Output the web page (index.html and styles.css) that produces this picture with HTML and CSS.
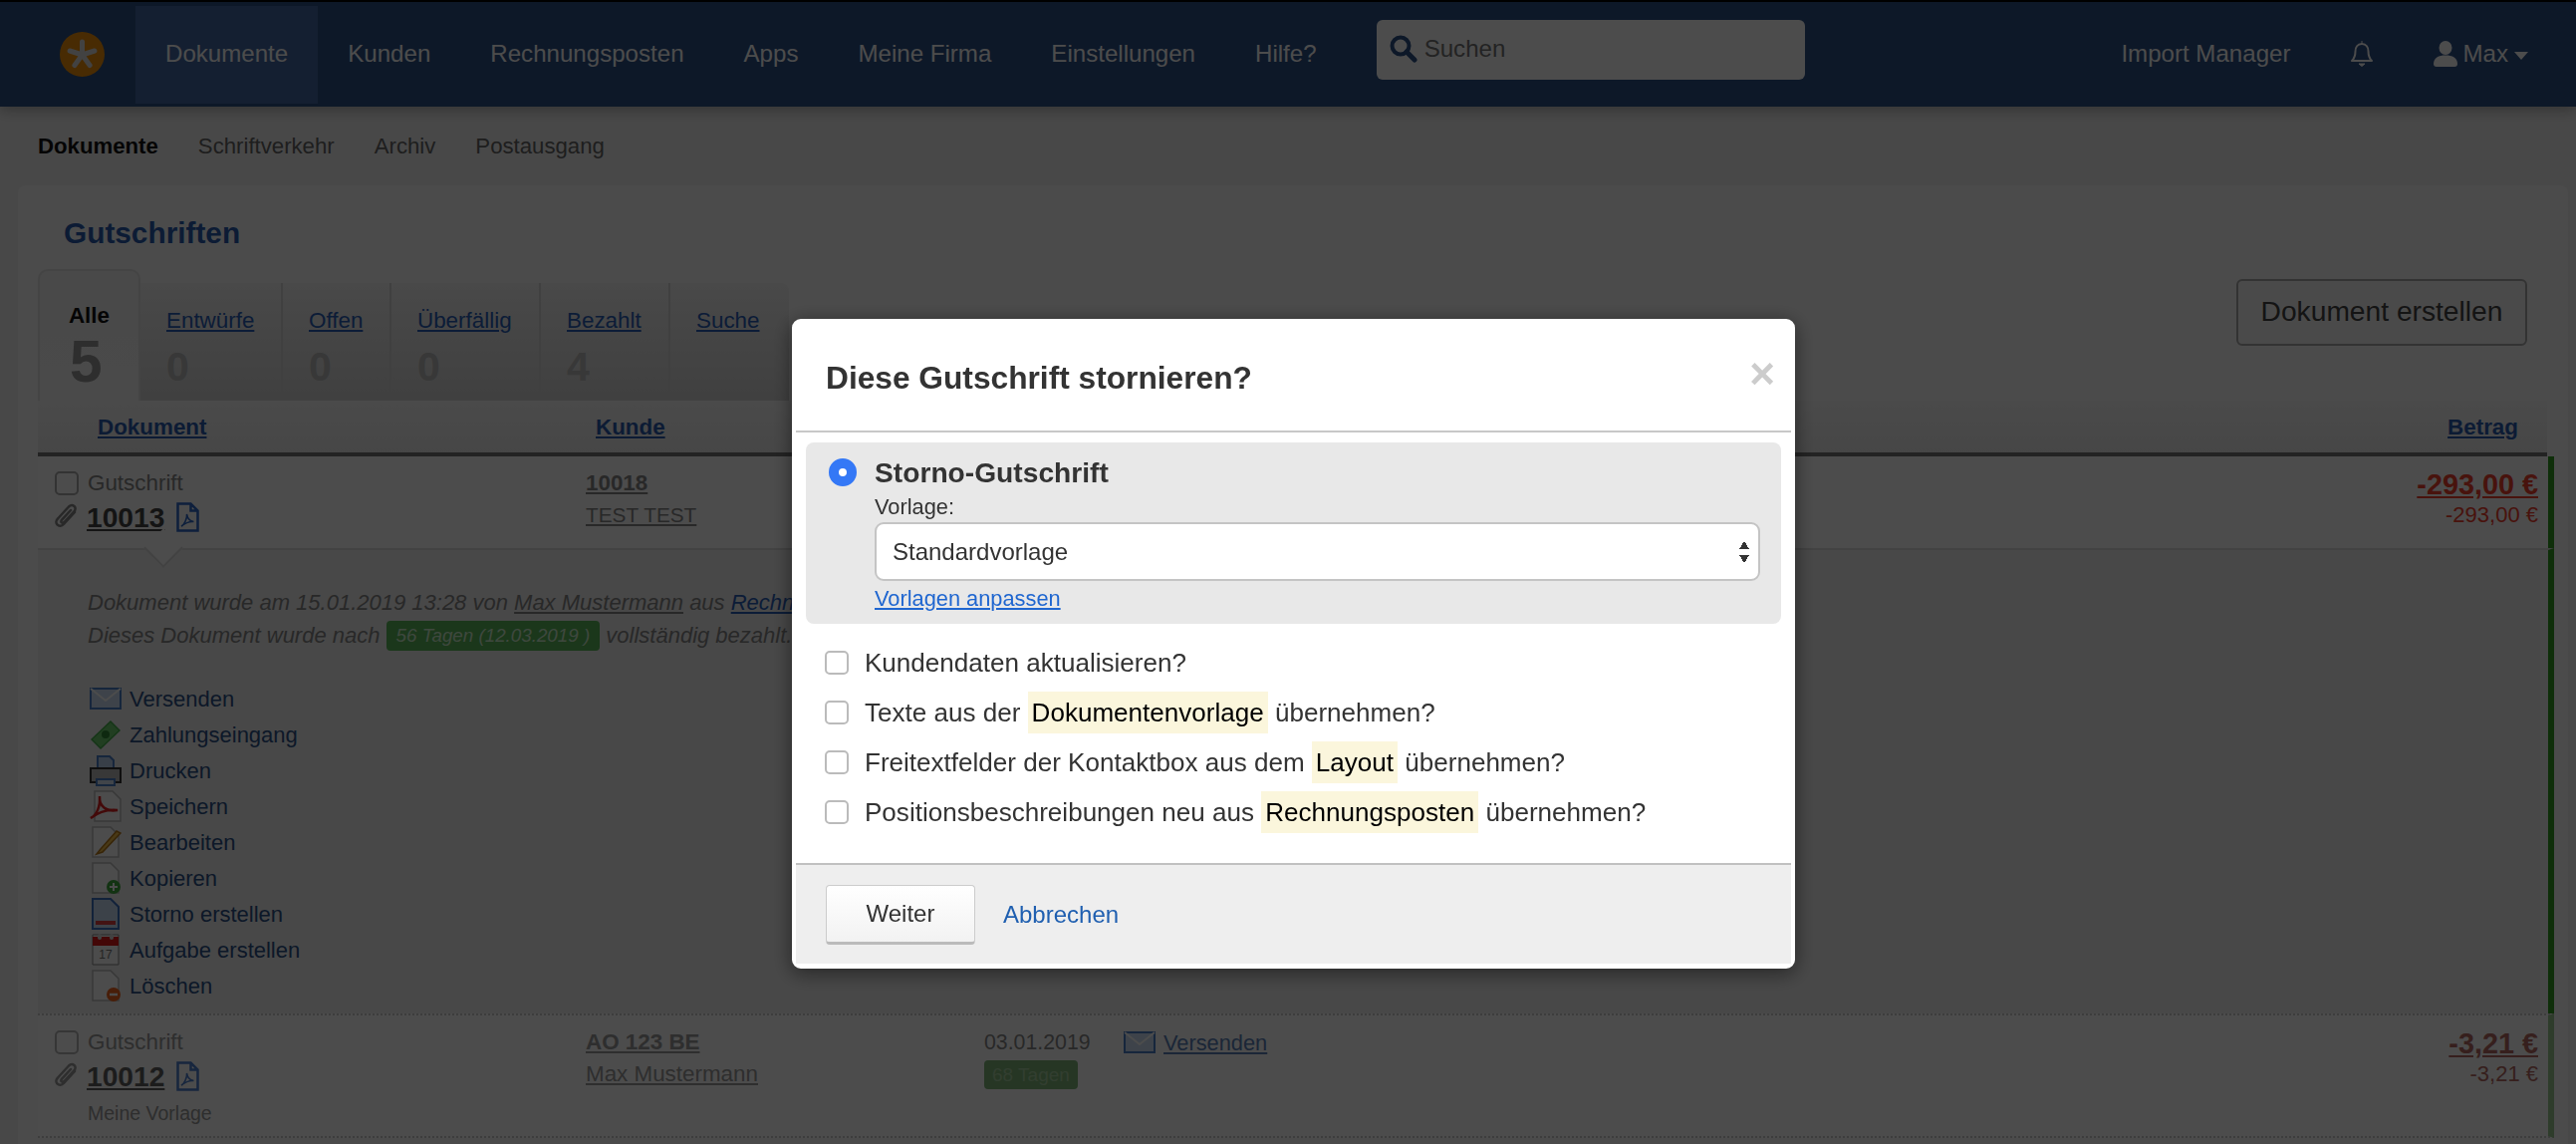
FILE: index.html
```html
<!DOCTYPE html>
<html lang="de">
<head>
  <meta charset="UTF-8">
  <title>Gutschriften</title>
  <link rel="stylesheet" href="styles.css">
</head>
<body>
  <div class="topnav">
    <a class="logo"><svg width="45" height="45" viewBox="0 0 45 45"><circle cx="22.5" cy="22.5" r="22.5" fill="#f0920a"/><path d="M22.5 23V10M22.500 23l12.400-4M22.500 23l7.600 10.500M22.500 23l-7.600 10.500M22.500 23l-12.400-4" stroke="#ddd" stroke-width="5" stroke-linecap="round"/></svg></a>
    <ul class="mainmenu">
      <li class="active">Dokumente</li>
      <li>Kunden</li>
      <li>Rechnungsposten</li>
      <li>Apps</li>
      <li>Meine Firma</li>
      <li>Einstellungen</li>
      <li>Hilfe?</li>
    </ul>
    <div class="search">
      <svg width="28" height="28" viewBox="0 0 28 28"><circle cx="11" cy="11" r="8.5" fill="none" stroke="#2c5088" stroke-width="4"/><path d="M17 17l8 8" stroke="#2c5088" stroke-width="5" stroke-linecap="round"/></svg>
      <span>Suchen</span>
    </div>
    <div class="usermenu">
      <span class="import">Import Manager</span>
      <svg class="bell" width="24" height="26" viewBox="0 0 24 26"><path d="M12 3c-4.500 0-6.500 3.500-6.500 7.500 0 4.500-1 7-3.500 9.500h20c-2.500-2.500-3.500-5-3.500-9.500C18.500 6.500 16.500 3 12 3z" fill="none" stroke="#fff" stroke-width="2" stroke-linejoin="round"/><path d="M12 0v3M9 23h6l-3 2.500z" stroke="#fff" fill="#fff"/></svg>
      <span class="user">
        <svg width="24" height="26" viewBox="0 0 24 26"><ellipse cx="12" cy="7" rx="6.500" ry="7" fill="#fff"/><path d="M0 23c0-6 5-8.500 12-8.500S24 17 24 23c0 2-1 3-3 3H3c-2 0-3-1-3-3z" fill="#fff"/></svg>
        Max<i class="caret"></i>
      </span>
    </div>
  </div>

  <ul class="subnav">
    <li class="current">Dokumente</li>
    <li>Schriftverkehr</li>
    <li>Archiv</li>
    <li>Postausgang</li>
  </ul>

  <div class="panel">
    <h1 class="title">Gutschriften</h1>

    <div class="toolbar">
      <div class="tabs">
        <div class="tab first"><b>Alle</b><strong>5</strong></div>
        <div class="tabstrip">
          <div class="tab w1"><a>Entwürfe</a><strong>0</strong></div>
          <div class="tab w2"><a>Offen</a><strong>0</strong></div>
          <div class="tab w3"><a>Überfällig</a><strong>0</strong></div>
          <div class="tab w4"><a>Bezahlt</a><strong>4</strong></div>
          <div class="tab"><a>Suche</a></div>
        </div>
      </div>
      <a class="create">Dokument erstellen</a>
    </div>

    <div class="thead">
      <a class="th-doc">Dokument</a>
      <a class="th-kunde">Kunde</a>
      <a class="th-betrag">Betrag</a>
    </div>

    <div class="row paid">
      <div class="cell-doc">
        <div class="doctype"><i class="check"></i>Gutschrift</div>
        <div class="docnum">
          <svg class="clip" width="24" height="28" viewBox="0 0 24 28"><path d="M20 9L9 21c-2 2.200-5 2.200-6.500.5C1 20 1 17.500 3 15.500L14 3.500c1.800-1.800 4-1.800 5.500-.5s1.500 3.500-.2 5.300L9.500 19c-1 1-2 1-2.700.4s-.6-1.700.3-2.700L16 7" fill="none" stroke="#888" stroke-width="2.500" stroke-linecap="round"/></svg>
          <a>10013</a>
          <svg class="pdf" width="23" height="30" viewBox="0 0 23 30"><path d="M1.500 1.500h13l7 7v20h-20zM14.500 1.500v7h7" fill="none" stroke="#2f6ac8" stroke-width="2.500"/><path d="M5 24c3-1 6-8 5.500-12 1 5 3 7 7 7.500-4-.5-8 1-12.500 4.500z" fill="none" stroke="#2f6ac8" stroke-width="1.500"/></svg>
        </div>
      </div>
      <div class="cell-kunde">
        <a class="knr">10018</a>
        <a class="kname tight">TEST TEST</a>
      </div>
      <div class="cell-betrag red">
        <a class="brutto">-293,00 €</a>
        <span class="netto">-293,00 €</span>
      </div>
    </div>

    <div class="details paid">
      <i class="notch"></i>
      <p>Dokument wurde am 15.01.2019 13:28 von <u>Max Mustermann</u> aus <a>Rechnung</a></p>
      <p>Dieses Dokument wurde nach <span class="badge">56 Tagen (12.03.2019 )</span> vollständig bezahlt.</p>
      <ul class="actions">
        <li>
          <svg width="32" height="26" viewBox="0 0 32 26"><rect x="1" y="3" width="30" height="20" fill="#cfe0f7" stroke="#4a7fc9" stroke-width="2"/><path d="M1 3l15 12L31 3" fill="none" stroke="#fff" stroke-width="2"/></svg>
          <a>Versenden</a>
        </li>
        <li>
          <svg width="32" height="30" viewBox="0 0 32 30"><path d="M1 20L21 1l10 10-20 19z" fill="#44b04a"/><path d="M3 20L21 3l8 8-18 17z" fill="#6fd06f"/><circle cx="16" cy="15" r="4" fill="#2f8a36"/></svg>
          <a>Zahlungseingang</a>
        </li>
        <li>
          <svg width="32" height="32" viewBox="0 0 32 32"><path d="M8 14V2h12l4 4v8z" fill="#bcd2f2" stroke="#4a7fc9" stroke-width="2"/><path d="M1 14h30v14H1z" fill="#bbb" stroke="#333" stroke-width="2"/><path d="M7 25h18v6H7z" fill="#dbe7f8" stroke="#4a7fc9" stroke-width="2"/></svg>
          <a>Drucken</a>
        </li>
        <li>
          <svg width="32" height="32" viewBox="0 0 32 32"><path d="M5 1h18l8 8v22H5z" fill="#fff" stroke="#bbb" stroke-width="1.500"/><path d="M1 28c6-3 10-12 9-22-1 10 7 16 18 14-9-1-18 1-27 8z" fill="none" stroke="#e02020" stroke-width="2.500"/></svg>
          <a>Speichern</a>
        </li>
        <li>
          <svg width="32" height="32" viewBox="0 0 32 32"><path d="M3 1h18l8 8v22H3z" fill="#fff" stroke="#bbb" stroke-width="1.500"/><path d="M27 5L11 23l-4 5 6-2 18-19z" fill="#f5c04a" stroke="#b97a1a" stroke-width="1.500"/></svg>
          <a>Bearbeiten</a>
        </li>
        <li>
          <svg width="32" height="32" viewBox="0 0 32 32"><path d="M3 1h18l8 8v22H3z" fill="#fff" stroke="#bbb" stroke-width="1.500"/><circle cx="24" cy="25" r="7" fill="#3faa3f"/><path d="M24 21v8M20 25h8" stroke="#fff" stroke-width="2"/></svg>
          <a>Kopieren</a>
        </li>
        <li>
          <svg width="32" height="32" viewBox="0 0 32 32"><path d="M3 1h18l8 8v22H3z" fill="#c9dcf6" stroke="#3d73c4" stroke-width="2"/><path d="M6 23h20v4H6z" fill="#e04040"/></svg>
          <a>Storno erstellen</a>
        </li>
        <li>
          <svg width="32" height="32" viewBox="0 0 32 32"><path d="M3 1h26v30H3z" fill="#fff" stroke="#888" stroke-width="1"/><path d="M3 3h26v9H3z" fill="#e01818"/><rect x="8" y="0" width="4" height="6" rx="2" fill="#ddd"/><rect x="20" y="0" width="4" height="6" rx="2" fill="#ddd"/><text class="calday" x="16" y="25">17</text></svg>
          <a>Aufgabe erstellen</a>
        </li>
        <li>
          <svg width="32" height="32" viewBox="0 0 32 32"><path d="M3 1h18l8 8v22H3z" fill="#fff" stroke="#bbb" stroke-width="1.500"/><circle cx="24" cy="25" r="7" fill="#f0641e"/><path d="M20 25h8" stroke="#fff" stroke-width="2.500"/></svg>
          <a>Löschen</a>
        </li>
      </ul>
    </div>

    <div class="row second paid-soft">
      <div class="cell-doc">
        <div class="doctype"><i class="check"></i>Gutschrift</div>
        <div class="docnum">
          <svg class="clip" width="24" height="28" viewBox="0 0 24 28"><path d="M20 9L9 21c-2 2.200-5 2.200-6.500.5C1 20 1 17.500 3 15.500L14 3.500c1.800-1.800 4-1.800 5.500-.5s1.500 3.500-.2 5.300L9.500 19c-1 1-2 1-2.700.4s-.6-1.700.3-2.700L16 7" fill="none" stroke="#888" stroke-width="2.500" stroke-linecap="round"/></svg>
          <a>10012</a>
          <svg class="pdf" width="23" height="30" viewBox="0 0 23 30"><path d="M1.500 1.500h13l7 7v20h-20zM14.500 1.500v7h7" fill="none" stroke="#2f6ac8" stroke-width="2.500"/><path d="M5 24c3-1 6-8 5.500-12 1 5 3 7 7 7.500-4-.5-8 1-12.500 4.500z" fill="none" stroke="#2f6ac8" stroke-width="1.500"/></svg>
        </div>
        <div class="tplname">Meine Vorlage</div>
      </div>
      <div class="cell-kunde">
        <a class="knr">AO 123 BE</a>
        <a class="kname">Max Mustermann</a>
      </div>
      <div class="cell-date">
        <span class="date">03.01.2019</span>
        <span class="badge soft">68 Tagen</span>
      </div>
      <div class="cell-send">
        <svg width="32" height="24" viewBox="0 0 32 24"><rect x="1" y="2" width="30" height="20" fill="#cfe0f7" stroke="#4a7fc9" stroke-width="2"/><path d="M1 2l15 12L31 2" fill="none" stroke="#fff" stroke-width="2"/></svg>
        <a>Versenden</a>
      </div>
      <div class="cell-betrag red soft">
        <a class="brutto">-3,21 €</a>
        <span class="netto">-3,21 €</span>
      </div>
    </div>
  </div>

  <div class="backdrop"></div>

  <div class="modal">
    <div class="modal-head">
      <h3>Diese Gutschrift stornieren?</h3>
      <span class="close">×</span>
    </div>
    <div class="modal-body">
      <div class="option">
        <i class="radio"></i>
        <div class="option-main">
          <b>Storno-Gutschrift</b>
          <label>Vorlage:</label>
          <div class="select">Standardvorlage<i class="updown"></i></div>
          <a>Vorlagen anpassen</a>
        </div>
      </div>
      <ul class="checks">
        <li><i class="check"></i>Kundendaten aktualisieren?</li>
        <li><i class="check"></i>Texte aus der <mark>Dokumentenvorlage</mark> übernehmen?</li>
        <li><i class="check"></i>Freitextfelder der Kontaktbox aus dem <mark>Layout</mark> übernehmen?</li>
        <li><i class="check"></i>Positionsbeschreibungen neu aus <mark>Rechnungsposten</mark> übernehmen?</li>
      </ul>
    </div>
    <div class="modal-foot">
      <a class="btn">Weiter</a>
      <a class="cancel">Abbrechen</a>
    </div>
  </div>
</body>
</html>
```

FILE: styles.css
```css
* {
  margin: 0;
  padding: 0;
  box-sizing: border-box;
}

html,
body {
  height: 100%;
  overflow: hidden;
}

body {
  font-family: "Liberation Sans", Arial, sans-serif;
  font-size: 21.8px;
  color: #888;
  background-color: #f2f2f2;
}

ul {
  list-style: none;
}

/* top navigation */
.topnav {
  display: flex;
  align-items: stretch;
  height: 107px;
  padding: 4px 0 3px;
  background-color: #2c5088;
  border-top: 2px solid #000;
  box-shadow: 0 2px 14px rgba(0, 0, 0, .35);
  color: #fff;
  font-size: 24.1px;
}

.logo {
  display: flex;
  align-items: center;
  width: 136px;
  padding: 0 0 2px 60px;
}

.mainmenu {
  display: flex;
}

.mainmenu>li {
  display: flex;
  align-items: center;
  padding: 0 30px 2px;
}

.mainmenu>.active {
  background-color: #456aa6;
}

.search {
  display: flex;
  align-items: center;
  gap: 7px;
  align-self: flex-start;
  width: 430px;
  height: 60px;
  margin: 14px 0 0 30px;
  padding: 0 0 2px 13px;
  background-color: #fff;
  border-radius: 6px;
  color: #777;
}

.usermenu {
  display: flex;
  align-items: center;
  margin-left: auto;
  padding: 0 48px 2px 0;
}

.bell {
  margin-left: 60px;
}

.user {
  display: flex;
  align-items: center;
  gap: 5px;
  margin-left: 60px;
}

.caret {
  width: 0;
  height: 0;
  margin-left: 1px;
  margin-top: 4px;
  border-style: solid;
  border-width: 8px 7px 0;
  border-color: #fff transparent transparent;
}

/* second level */
.subnav {
  display: flex;
  gap: 40px;
  height: 79px;
  padding: 27px 0 0 38px;
  font-size: 22.2px;
  color: #666;
}

.subnav>.current {
  color: #111;
  font-weight: 700;
}

.panel {
  height: 1000px;
  margin: 0 8px 0 18px;
  padding: 0 0 0 20px;
  background-color: #fcfcfc;
  border-radius: 8px 8px 0 0;
}

.title {
  padding: 31px 0 0 26px;
  height: 84px;
  font-size: 29.8px;
  color: #2a5cb0;
}

.toolbar {
  display: flex;
  justify-content: space-between;
  align-items: flex-start;
  height: 132px;
  padding-right: 41px;
}

.tabs {
  display: flex;
  align-items: flex-end;
  height: 132px;
}

.tab {
  display: flex;
  flex-direction: column;
  padding-left: 26px;
  height: 118px;
}

.tab a {
  margin-top: 26px;
  font-size: 22.4px;
  line-height: 24px;
  color: #2a60b8;
  text-decoration: underline;
}

.tab strong {
  margin-top: 11px;
  font-size: 41px;
  line-height: 46px;
  color: #bbb;
}

.tab.first {
  width: 103px;
  height: 132px;
  padding: 0;
  align-items: center;
  background-image: linear-gradient(#f4f4f4, #f8f8f8);
  border: 2px solid #e4e4e4;
  border-bottom: 0;
  border-radius: 10px 10px 0 0;
}

.tab.first b {
  margin-top: 32px;
  font-size: 22.4px;
  line-height: 26px;
  color: #111;
}

.tab.first strong {
  margin-top: 2px;
  font-size: 58.5px;
  line-height: 62px;
  color: #999;
  align-self: flex-start;
  padding-left: 30px;
}

.tabstrip {
  display: flex;
  width: 651px;
  background-image: linear-gradient(#f4f4f4, #d6d6d6);
  border-radius: 0 8px 0 0;
}

.tabstrip>.tab {
  border-right: 2px solid #d8d8d8;
}

.tabstrip>.tab:last-child {
  border-right: 0;
}

.w1 {
  width: 143px;
}

.w2 {
  width: 109px;
}

.w3 {
  width: 150px;
}

.w4 {
  width: 130px;
}

.create {
  width: 292px;
  height: 67px;
  margin-top: 10px;
  font-size: 28.2px;
  line-height: 61px;
  text-align: center;
  color: #444;
  background-color: #f8f8f8;
  border: 2px solid #aaa;
  border-radius: 6px;
}

.thead {
  display: flex;
  width: 2519px;
  height: 56px;
  padding-top: 15px;
  background-image: linear-gradient(#f8f8f8, #ececec);
  border-bottom: 4px solid #777;
  font-size: 22.4px;
  font-weight: 700;
}

.thead a {
  line-height: 24px;
  color: #2a5cb0;
  text-decoration: underline;
}

.th-doc {
  margin-left: 60px;
  width: 500px;
}

.th-betrag {
  margin-left: auto;
  margin-right: 29px;
}

/* table rows */
.row {
  display: grid;
  grid-template-columns: 550px 400px 140px 1fr auto;
  width: 2526px;
  padding-right: 10px;
  background-color: #fff;
  border-right: 6px solid #2f9a1e;
}

.row a {
  text-decoration: underline;
}

.row.paid {
  height: 92px;
  padding-top: 15px;
}

.cell-doc {
  padding-left: 17px;
}

.doctype {
  display: flex;
  align-items: center;
  gap: 9px;
  height: 24px;
  font-size: 22.4px;
}

.check {
  display: block;
  flex: none;
  width: 24px;
  height: 24px;
  background-color: #fff;
  border: 2px solid #aaa;
  border-radius: 5px;
}

.docnum {
  display: flex;
  align-items: center;
  margin-top: 6px;
  height: 32px;
}

.clip {
  margin-right: 8px;
}

.docnum a {
  margin-right: 12px;
  font-size: 28.2px;
  font-weight: 700;
  color: #444;
}

.cell-kunde {
  display: flex;
  flex-direction: column;
  gap: 8px;
  align-items: flex-start;
  font-size: 22.4px;
  line-height: 24px;
  color: #888;
}

.knr {
  font-weight: 700;
}

.kname.tight {
  font-size: 20.8px;
}

.cell-betrag {
  grid-column: 5;
  display: flex;
  flex-direction: column;
  align-items: flex-end;
  margin-top: -2px;
}

.red {
  color: #f0402e;
}

.brutto {
  font-size: 28.8px;
  line-height: 30px;
  font-weight: 700;
}

.netto {
  margin-top: 3px;
  font-size: 22px;
  line-height: 26px;
}

/* expanded row */
.details {
  position: relative;
  width: 2526px;
  height: 467px;
  padding: 36px 0 0 50px;
  background-color: #f0f0f0;
  border-top: 2px solid #dcdcdc;
  border-right: 6px solid #2f9a1e;
  font-size: 22px;
  font-style: italic;
  line-height: 33px;
  color: #888;
}

.details a {
  color: #2a60b8;
  text-decoration: underline;
}

.notch {
  position: absolute;
  left: 112px;
  top: -2px;
  width: 28px;
  height: 28px;
  background-color: #fff;
  border: 2px solid #dcdcdc;
  border-top: 0;
  border-left: 0;
  transform: translateY(-14px) rotate(45deg);
}

.badge {
  display: inline-block;
  height: 30px;
  padding: 0 10px;
  line-height: 30px;
  font-size: 18.8px;
  color: #d0f0d0;
  background-color: #5cb85c;
  border-radius: 4px;
  vertical-align: 1px;
}

.actions {
  display: flex;
  flex-direction: column;
  margin: 29px 0 0 2px;
  font-style: normal;
}

.actions>li {
  display: flex;
  align-items: center;
  gap: 8px;
  height: 36px;
}

.actions svg {
  flex: none;
}

.actions a {
  color: #2c5088;
  text-decoration: none;
}

.calday {
  font-family: "Liberation Sans", Arial, sans-serif;
  font-size: 12px;
  text-anchor: middle;
  fill: #777;
}

.second {
  position: relative;
  height: 125px;
  padding-top: 15px;
  border-top: 2px dotted #ccc;
  border-bottom: 2px dotted #ccc;
  border-right-color: #9ac98f;
}

.second .doctype,
.second .docnum,
.second .cell-kunde,
.second .tplname {
  opacity: .85;
}

.tplname {
  padding-left: 33px;
  margin-top: 10px;
  font-size: 19.5px;
}

.cell-date {
  display: flex;
  flex-direction: column;
  align-items: flex-start;
  gap: 6px;
  font-size: 21.3px;
  line-height: 24px;
  color: #888;
}

.badge.soft {
  height: 29px;
  padding: 0 8px;
  font-size: 19px;
  background-color: #7fb57a;
  color: #a8d0a0;
  line-height: 29px;
}

.cell-send {
  display: flex;
  align-items: flex-start;
  gap: 8px;
  height: 26px;
}

.cell-send a {
  color: #5a7fb8;
}

.red.soft {
  color: #b56a62;
}

.backdrop {
  position: fixed;
  left: 0;
  top: 0;
  right: 0;
  bottom: 0;
  background-color: rgba(0, 0, 0, .7);
}

/* dialog */
.modal {
  position: fixed;
  left: 795px;
  top: 320px;
  width: 1007px;
  height: 652px;
  background-color: #fff;
  border: 4px solid #fff;
  border-bottom-width: 5px;
  border-radius: 9px;
  color: #333;
  box-shadow: 0 4px 20px rgba(0, 0, 0, .5);
}

.modal-head {
  display: flex;
  justify-content: space-between;
  height: 110px;
  padding: 35px 16px 0 30px;
  border-bottom: 2px solid #c8c8c8;
}

.modal-head h3 {
  font-size: 31.7px;
  line-height: 40px;
}

.close {
  margin-top: -8px;
  font-size: 44px;
  line-height: 48px;
  font-weight: 700;
  color: #ccc;
}

.modal-body {
  height: 432px;
  padding: 10px 10px 0;
}

.option {
  display: flex;
  height: 182px;
  padding: 16px 21px 0 23px;
  background-color: #e8e8e8;
  border-radius: 8px;
}

.radio {
  flex: none;
  width: 28px;
  height: 28px;
  margin: 0 18px 0 0;
  border-radius: 50%;
  border: 10px solid #3478f6;
  background-clip: padding-box;
  background-color: #fff;
}

.option-main {
  display: flex;
  flex: 1;
  flex-direction: column;
  align-items: flex-start;
}

.option-main b {
  font-size: 28.2px;
  line-height: 28px;
}

.option-main label {
  margin-top: 9px;
  line-height: 24px;
}

.option-main a {
  margin-top: 6px;
  line-height: 24px;
  color: #1f66d0;
  text-decoration: underline;
}

.select {
  position: relative;
  width: 100%;
  height: 59px;
  margin-top: 3px;
  padding-left: 16px;
  font-size: 24px;
  line-height: 55px;
  background-color: #fff;
  border: 2px solid #c4c4c4;
  border-radius: 9px;
}

.updown {
  position: absolute;
  right: 9px;
  top: 17px;
  width: 10px;
  height: 22px;
  background-image: linear-gradient(to bottom right, transparent 50%, #333 50%), linear-gradient(to bottom left, transparent 50%, #333 50%), linear-gradient(to top right, transparent 50%, #333 50%), linear-gradient(to top left, transparent 50%, #333 50%);
  background-size: 5px 8px;
  background-repeat: no-repeat;
  background-position: 0 0, 5px 0, 0 14px, 5px 14px;
}

.checks {
  margin-top: 14px;
  font-size: 26.05px;
}

.checks>li {
  display: flex;
  align-items: center;
  white-space: pre;
  height: 50px;
  padding-left: 19px;
}

.checks .check {
  width: 24px;
  margin-right: 16px;
  border-color: #bbb;
}

mark {
  display: inline-block;
  padding: 0 4px;
  line-height: 42px;
  color: #000;
  background-color: #fbf6dc;
}

.modal-foot {
  display: flex;
  align-items: center;
  gap: 28px;
  height: 101px;
  padding-left: 30px;
  background-color: #eee;
  border-top: 2px solid #c0c0c0;
}

.btn {
  width: 150px;
  height: 60px;
  font-size: 24px;
  line-height: 56px;
  text-align: center;
  background-image: linear-gradient(#fff, #f2f2f2);
  border: 1px solid #ccc;
  border-bottom: 3px solid #bbb;
  border-radius: 4px;
}

.cancel {
  font-size: 24px;
  color: #1f5fb0;
}
```
